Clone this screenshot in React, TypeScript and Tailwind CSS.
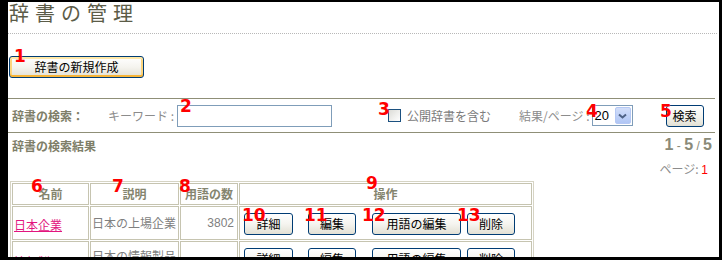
const jp = "font-['Noto_Sans_CJK_JP',sans-serif]";

function Num({ n, className }: { n: string; className: string }) {
	return (
		<span
			className={`absolute font-['DejaVu_Sans',sans-serif] font-bold text-[17px] leading-none text-[#ff0000] ${className}`}
		>
			{n}
		</span>
	);
}

function XpButton({ label, className }: { label: string; className: string }) {
	return (
		<button
			className={`h-[22px] rounded-[3px] border border-[#003c74] bg-linear-to-b from-white via-[#f5f4ef] to-[#e2e0d4] text-[12px] leading-none text-black ${jp} ${className}`}
		>
			{label}
		</button>
	);
}

function Row({ name, desc, count, tall }: { name: string; desc: string; count: string; tall?: boolean }) {
	const cell = tall ? "align-top" : "align-middle";
	return (
		<tr>
			<td className={`border border-[#c6c4b0] pl-[1px] ${tall ? "h-[60px] pt-[6px]" : "h-[34px]"} ${cell}`}>
				<span className="text-[12px] leading-[16px] text-[#e2167e] underline">{name}</span>
			</td>
			<td className={`border border-[#c6c4b0] pl-[1px] text-[12px] leading-[16px] text-[#808080] ${tall ? "pt-[6px]" : ""} ${cell}`}>
				{desc}
			</td>
			<td className="border border-[#c6c4b0] pr-[3px] text-right align-middle font-['Liberation_Sans',sans-serif] text-[12px] text-[#808080]">
				{count}
			</td>
			<td className={`border border-[#c6c4b0] pl-[4px] ${tall ? "pt-[6px]" : ""} ${cell}`}>
				<div className={`${tall ? "" : "mt-[2px]"} flex`}>
					<XpButton label="詳細" className="w-[49px]" />
					<XpButton label="編集" className="ml-[15px] w-[48px]" />
					<XpButton label="用語の編集" className="ml-[16px] w-[89px]" />
					<XpButton label="削除" className="ml-[6px] w-[48px]" />
				</div>
			</td>
		</tr>
	);
}

export default function App() {
	return (
		<div className={`relative h-[260px] w-[722px] bg-black pb-[3px] pl-[8px] pr-[3px] pt-[2px] ${jp}`}>
			<div className="h-[255px] w-[711px] overflow-hidden bg-white">
				<div className="pl-[1px] text-[20px] leading-[22px] tracking-[6px] text-[#5c5c48]">辞書の管理</div>
				<div className="mt-[9px] w-[709px] border-t border-dotted border-[#b8b8b8]"></div>

				<button className="ml-[1px] mt-[22px] h-[22px] w-[135px] rounded-[3px] border border-[#003c74] bg-linear-to-b from-white via-[#f5f4ef] to-[#e2e0d4] text-[12px] leading-none text-black shadow-[inset_0_-2px_0_#f6b437,inset_0_2px_0_#ffe9a8,inset_2px_0_0_#fcd57e,inset_-2px_0_0_#fcd57e]">
					辞書の新規作成
				</button>

				<div className="mt-[20px] w-[707px] border-t border-[#8f8f77]"></div>
				<div className="flex h-[33px] items-center pl-[4px] text-[12px]">
					<span className="font-bold text-[#7e7e68]">辞書の検索：</span>
					<span className="ml-[24px] text-[#8c8c8c]">キーワード :</span>
					<div className="ml-[3px] h-[22px] w-[155px] border border-[#7f9db9] bg-white"></div>
					<div className="ml-[56px] h-[13px] w-[13px] border border-[#1c5180] bg-linear-to-br from-[#dcdcd7] to-white"></div>
					<span className="ml-[6px] text-[#7a7a7a]">公開辞書を含む</span>
					<span className="ml-[28px] text-[#8c8c8c]">結果/ページ :</span>
					<div className="ml-[2px] flex h-[21px] w-[41px] items-center border border-[#7f9db9] bg-white p-[1px]">
						<span className="flex-1 pl-[1px] font-['Liberation_Sans',sans-serif] text-[13px] text-black">20</span>
						<div className="flex h-[17px] w-[16px] items-center justify-center rounded-[2px] border border-[#b5c8f4] bg-linear-to-b from-[#d2def9] to-[#b0c6f5]">
							<svg width="9" height="6" viewBox="0 0 9 6">
								<path d="M1 1.5 L4.5 4.5 L8 1.5" fill="none" stroke="#4d6185" strokeWidth="2" />
							</svg>
						</div>
					</div>
					<XpButton label="検索" className="ml-[33px] w-[38px]" />
				</div>
				<div className="w-[707px] border-t border-[#8f8f77]"></div>

				<div className="flex h-[48px] justify-between pl-[4px] pr-[7px]">
					<div className="pt-[5px] text-[12px] font-bold leading-[16px] text-[#7e7e68]">辞書の検索結果</div>
					<div className="flex flex-col items-end pt-[4px]">
						<div className="font-['Liberation_Sans',sans-serif] text-[16px] leading-[16px] text-[#8a8a78]">
							<span className="font-bold">1</span>
							<span className="text-[12px]"> - </span>
							<span className="font-bold">5</span>
							<span className="text-[12px]"> / </span>
							<span className="font-bold">5</span>
						</div>
						<div className="mr-[4px] mt-[7px] text-[12px] leading-[16px] text-[#8c8c8c]">
							ページ: <span className="font-['Liberation_Sans',sans-serif] text-[#ff0000]">1</span>
						</div>
					</div>
				</div>

				<table className="ml-[2px] w-[524px] table-fixed border-separate border-spacing-[1px] border border-[#d6d4c4]">
					<thead>
						<tr className="text-[12px] font-bold text-[#85856f]">
							<th className="h-[22px] w-[77px] border border-[#c6c4b0] align-middle">名前</th>
							<th className="w-[89px] border border-[#c6c4b0] align-middle">説明</th>
							<th className="w-[58px] border border-[#c6c4b0] align-middle">用語の数</th>
							<th className="w-[293px] border border-[#c6c4b0] align-middle">操作</th>
						</tr>
					</thead>
					<tbody>
						<Row name="日本企業" desc="日本の上場企業" count="3802" />
						<Row name="情報製品" desc="日本の情報製品" count="1250" tall />
					</tbody>
				</table>
			</div>

			<Num n="1" className="left-[14px] top-[48px]" />
			<Num n="2" className="left-[180px] top-[98px]" />
			<Num n="3" className="left-[378px] top-[101px]" />
			<Num n="4" className="left-[586px] top-[103px]" />
			<Num n="5" className="left-[660px] top-[103px]" />
			<Num n="6" className="left-[31px] top-[178px]" />
			<Num n="7" className="left-[112px] top-[178px]" />
			<Num n="8" className="left-[179px] top-[178px]" />
			<Num n="9" className="left-[366px] top-[175px]" />
			<Num n="10" className="left-[242px] top-[207px]" />
			<Num n="11" className="left-[304px] top-[207px]" />
			<Num n="12" className="left-[362px] top-[207px]" />
			<Num n="13" className="left-[457px] top-[207px]" />
		</div>
	);
}
